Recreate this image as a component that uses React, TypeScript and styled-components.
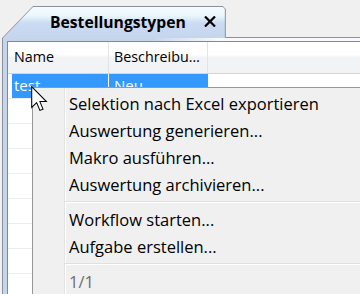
import React from "react";
import styled, { createGlobalStyle } from "styled-components";

const Global = createGlobalStyle`
  html, body { margin: 0; padding: 0; background: #f0f0f0; }
  body { font-family: "Open Sans", "Noto Sans", sans-serif; overflow: hidden; }
  #root { width: 360px; height: 294px; position: relative; overflow: hidden; }
`;

const Window = styled.div`
  display: flex;
  flex-direction: column;
  width: 360px;
  height: 294px;
`;

const TabStrip = styled.div`
  display: flex;
  align-items: flex-end;
  height: 38px;
  padding: 6px 0 0 2px;
  box-sizing: border-box;
`;

const TabOuter = styled.div`
  height: 32px;
  padding: 1px 1px 0 1px;
  box-sizing: border-box;
  background: #8c909a;
  clip-path: polygon(0 100%, 31px 0, calc(100% - 3px) 0, 100% 3px, 100% 100%);
`;

const TabInner = styled.div`
  height: 100%;
  display: flex;
  align-items: center;
  gap: 18px;
  padding: 0 9px 2px 47px;
  box-sizing: border-box;
  background: linear-gradient(#f4fcff 0%, #eaf7fd 28%, #cbdbf2 52%, #c5d5ee 100%);
  clip-path: polygon(0 100%, 30px 0, calc(100% - 2px) 0, 100% 2px, 100% 100%);
`;

const TabTitle = styled.span`
  font-weight: 700;
  font-size: 15.7px;
  color: #000;
`;

const StripFill = styled.div`
  flex: 1;
  align-self: stretch;
  border-bottom: 1px solid #8c909a;
`;

const Frame = styled.div`
  flex: 1;
  display: flex;
  margin-left: 2px;
  padding: 3px 0 0 4px;
  border-left: 1px solid #8c909a;
  background: linear-gradient(to right, #c5d5ee 0, #c5d5ee 150px, #f7f9fc 215px);
`;

const Grid = styled.div`
  flex: 1;
  background: #fff;
  border-top: 1px solid #828790;
  border-left: 1px solid #828790;
  display: flex;
  flex-direction: column;
`;

const HeaderRow = styled.div`
  display: grid;
  grid-template-columns: 101px 99px 1fr;
  height: 32px;
  box-sizing: border-box;
  border-bottom: 1px solid #d5d5d5;
  background: linear-gradient(#ffffff 0%, #ffffff 40%, #f2f3f5 50%, #f2f3f5 100%);
`;

const HeaderCell = styled.div<{ $pad: number; $sep?: boolean }>`
  display: flex;
  align-items: center;
  padding-left: ${(p) => p.$pad}px;
  padding-bottom: 2px;
  font-size: 14.3px;
  color: #000;
  border-right: ${(p) => (p.$sep ? "1px solid #e3e4e6" : "none")};
  white-space: nowrap;
  overflow: hidden;
`;

const Row = styled.div`
  display: grid;
  grid-template-columns: 96px 99px 1fr;
  column-gap: 1px;
  height: 25px;
  padding-left: 4px;
  box-sizing: border-box;
  border-bottom: 1px solid #ededed;
`;

const Cell = styled.div<{ $sel?: boolean; $pad: number }>`
  display: flex;
  align-items: center;
  padding-left: ${(p) => p.$pad}px;
  padding-bottom: 2px;
  font-size: 15px;
  color: ${(p) => (p.$sel ? "#fff" : "#000")};
  background: ${(p) => (p.$sel ? "#3399ff" : "transparent")};
`;

const Menu = styled.div`
  position: absolute;
  left: 32px;
  top: 87px;
  width: 340px;
  height: 230px;
  border: 1px solid #979797;
  padding-top: 2px;
  background: linear-gradient(
      to right,
      transparent 31px,
      #e2e3e3 31px,
      #e2e3e3 32px,
      #ffffff 32px,
      #ffffff 33px,
      transparent 33px
    ),
    #f0f0f0;
  display: flex;
  flex-direction: column;
`;

const Item = styled.div<{ $disabled?: boolean }>`
  height: 27px;
  display: flex;
  align-items: center;
  padding-left: 36px;
  font-size: 16.5px;
  color: ${(p) => (p.$disabled ? "#6d6d6d" : "#000")};
  white-space: nowrap;
`;

const Separator = styled.div`
  height: 8px;
  margin-left: 32px;
  display: flex;
  flex-direction: column;
  justify-content: center;
  &::before {
    content: "";
    height: 1px;
    background: #e0e0e0;
  }
  &::after {
    content: "";
    height: 1px;
    background: #ffffff;
  }
`;

const Cursor = styled.svg`
  position: absolute;
  left: 31px;
  top: 86px;
`;

const CloseIcon = () => (
  <svg width="12" height="11" viewBox="0 0 12 11">
    <path d="M1 0.5 L11 10.5 M11 0.5 L1 10.5" stroke="#000" strokeWidth="2.2" fill="none" />
  </svg>
);

export default function App() {
  const empty = Array.from({ length: 9 });
  return (
    <>
      <Global />
      <Window>
        <TabStrip>
          <TabOuter>
            <TabInner>
              <TabTitle>Bestellungstypen</TabTitle>
              <CloseIcon />
            </TabInner>
          </TabOuter>
          <StripFill />
        </TabStrip>
        <Frame>
          <Grid>
            <HeaderRow>
              <HeaderCell $pad={6} $sep>Name</HeaderCell>
              <HeaderCell $pad={5} $sep>Beschreibu…</HeaderCell>
              <HeaderCell $pad={5} />
            </HeaderRow>
            <Row>
              <Cell $sel $pad={2}>test</Cell>
              <Cell $sel $pad={5}>Neu</Cell>
              <Cell $pad={5} />
            </Row>
            {empty.map((_, i) => (
              <Row key={i}>
                <Cell $pad={2} />
                <Cell $pad={5} />
                <Cell $pad={5} />
              </Row>
            ))}
          </Grid>
        </Frame>
      </Window>
      <Menu>
        <Item>Selektion nach Excel exportieren</Item>
        <Item>Auswertung generieren...</Item>
        <Item>Makro ausführen...</Item>
        <Item>Auswertung archivieren...</Item>
        <Separator />
        <Item>Workflow starten...</Item>
        <Item>Aufgabe erstellen...</Item>
        <Separator />
        <Item $disabled>1/1</Item>
      </Menu>
      <Cursor width="17" height="26" viewBox="0 0 13 20">
        <path
          d="M0.5 0.5 L0.5 16.5 L4.3 12.8 L6.8 18.8 L9.2 17.8 L6.8 12 L11.8 12 Z"
          fill="#fff"
          stroke="#000"
          strokeWidth="0.8"
          strokeLinejoin="miter"
        />
      </Cursor>
    </>
  );
}
